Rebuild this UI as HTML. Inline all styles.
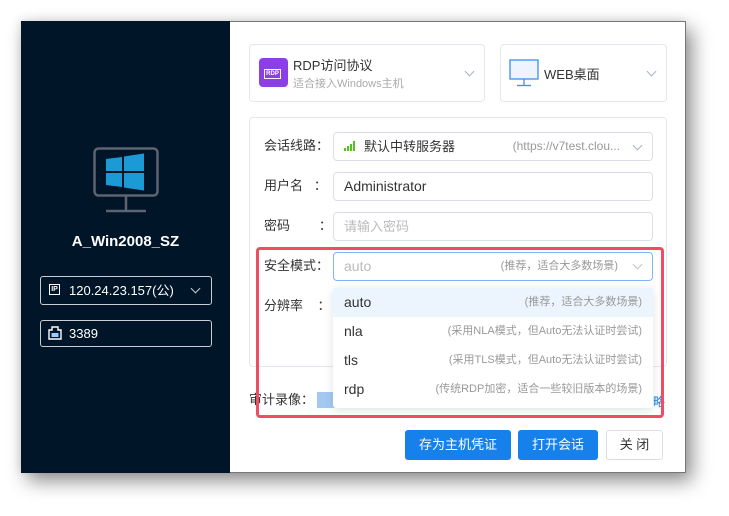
<!DOCTYPE html><html><head><meta charset="utf-8"><style>
*{box-sizing:border-box;margin:0;padding:0}
body{width:729px;height:516px;background:#fff;position:relative;overflow:hidden;font-family:"Liberation Sans","Noto Sans CJK SC",sans-serif;font-size:13px;color:#333}
.abs{position:absolute}
.win{left:21px;top:21px;width:665px;height:452px;background:#fff;box-shadow:6px 8px 18px rgba(0,0,0,.45),-2px -2px 8px rgba(0,0,0,.08);border:1px solid #777}
.left{left:21px;top:21px;width:209px;height:452px;background:#011528}
.box{border:1px solid #e4e7ed;border-radius:4px;background:#fff}
.inp{border:1px solid #dcdfe6;border-radius:4px;background:#fff;height:29px;font-size:13px;line-height:27px;padding-left:10px}
.lbl{font-size:13px;color:#333;line-height:16px}
.chev{width:7px;height:7px;border-right:1px solid #a8b0c0;border-bottom:1px solid #a8b0c0;transform:rotate(45deg)}
.btn{height:30px;border-radius:3px;background:#1681eb;color:#fff;font-size:13px;text-align:center;line-height:30px}
.opt{left:333px;width:320px;height:29px;line-height:29px;padding:0 11px;font-size:13px}
.opt span{float:right;font-size:11px;color:#999}
</style></head><body>
<div class="abs win"></div>
<div class="abs left"></div>
<svg class="abs" style="left:93px;top:147px" width="66" height="66" viewBox="0 0 66 66"><rect x="1.5" y="1.5" width="63" height="47" rx="4" fill="none" stroke="#5c6470" stroke-width="2.5"/><line x1="33" y1="49" x2="33" y2="63" stroke="#5c6470" stroke-width="2.5"/><line x1="13" y1="64" x2="53" y2="64" stroke="#5c6470" stroke-width="2.5"/><path d="M13 12l16-2v14H13zM31 9.5l20-3V24H31zM13 26h16v14l-16-2zM31 26h20v17.5l-20-3z" fill="#1c9ad6"/></svg>
<div class="abs" style="left:21px;top:233px;width:209px;text-align:center;color:#fff;font-weight:bold;font-size:15px">A_Win2008_SZ</div>
<div class="abs" style="left:40px;top:276px;width:172px;height:29px;border:1px solid #c9ccd2;border-radius:3px;color:#fff;font-size:13px;line-height:27px;padding-left:28px">120.24.23.157(公)</div>
<div class="abs" style="left:49px;top:284px;width:11px;height:11px;border:1px solid #fff;font-size:7px;color:#fff;line-height:9px;text-align:center;font-weight:bold">IP</div>
<div class="abs chev" style="left:192px;top:285px;border-color:#c9ccd2"></div>
<div class="abs" style="left:40px;top:320px;width:172px;height:27px;border:1px solid #c9ccd2;border-radius:3px;color:#fff;font-size:13px;line-height:25px;padding-left:28px">3389</div>
<svg class="abs" style="left:48px;top:326px" width="14" height="14" viewBox="0 0 14 14"><path d="M4 1h6v3h3v9H1V4h3z" fill="none" stroke="#fff" stroke-width="1.4"/><rect x="3.5" y="7" width="7" height="4" fill="#9cf"/></svg>

<div class="abs box" style="left:249px;top:44px;width:236px;height:58px"></div>
<div class="abs" style="left:259px;top:58px;width:29px;height:29px;border-radius:4px;background:#8d3fe6"></div>
<div class="abs" style="left:264px;top:69px;width:17px;height:10px;border:1px solid #fff;color:#fff;font-size:6px;line-height:8px;text-align:center;font-weight:bold">RDP</div>
<div class="abs" style="left:293px;top:55px;font-size:13px;color:#333">RDP访问协议</div>
<div class="abs" style="left:293px;top:75px;font-size:11px;color:#aaa">适合接入Windows主机</div>
<div class="abs chev" style="left:466px;top:68px"></div>
<div class="abs box" style="left:500px;top:44px;width:167px;height:58px"></div>
<svg class="abs" style="left:509px;top:59px" width="31" height="28" viewBox="0 0 31 28"><rect x="1" y="1" width="28" height="19" fill="#eef4ff" stroke="#3b8ff0" stroke-width="1.3"/><line x1="15" y1="20" x2="15" y2="26" stroke="#3b8ff0" stroke-width="1.3"/><line x1="8" y1="26.5" x2="22" y2="26.5" stroke="#3b8ff0" stroke-width="1.3"/></svg>
<div class="abs" style="left:544px;top:64px;font-size:13px;color:#333">WEB桌面</div>
<div class="abs chev" style="left:648px;top:68px"></div>

<div class="abs box" style="left:249px;top:117px;width:418px;height:250px"></div>
<div class="abs lbl" style="left:264px;top:138px">会话线路：</div>
<div class="abs inp" style="left:333px;top:132px;width:320px;padding-left:30px">默认中转服务器<span style="position:absolute;right:32px;color:#999;font-size:12px">(https://v7test.clou...</span></div>
<svg class="abs" style="left:344px;top:141px" width="12" height="10"><rect x="0" y="7" width="2" height="3" fill="#52c41a"/><rect x="3" y="5" width="2" height="5" fill="#52c41a"/><rect x="6" y="3" width="2" height="7" fill="#52c41a"/><rect x="9" y="0" width="2" height="10" fill="#52c41a"/></svg>
<div class="abs chev" style="left:634px;top:142px"></div>
<div class="abs lbl" style="left:264px;top:178px">用户名&nbsp;&nbsp;&nbsp;：</div>
<div class="abs inp" style="left:333px;top:172px;width:320px;font-size:14px">Administrator</div>
<div class="abs lbl" style="left:264px;top:218px">密码&nbsp;&nbsp;&nbsp;&nbsp;&nbsp;&nbsp;&nbsp;&nbsp;：</div>
<div class="abs inp" style="left:333px;top:212px;width:320px;color:#bbb">请输入密码</div>
<div class="abs lbl" style="left:264px;top:258px">安全模式：</div>
<div class="abs inp" style="left:333px;top:252px;width:320px;color:#bbb;border-color:#7fb5f5;font-size:14px">auto<span style="position:absolute;right:34px;color:#999;font-size:11px">(推荐，适合大多数场景)</span></div>
<div class="abs chev" style="left:634px;top:261px;border-color:#c0c4cc"></div>
<div class="abs lbl" style="left:264px;top:298px">分辨率&nbsp;&nbsp;&nbsp;&nbsp;：</div>
<div class="abs lbl" style="left:249px;top:392px">审计录像：</div>
<div class="abs" style="left:317px;top:392px;width:20px;height:16px;background:#a3c9f3"></div>
<div class="abs" style="left:653px;top:393px;color:#1681eb;font-size:12px">略</div>

<div class="abs" style="left:333px;top:288px;width:320px;height:120px;background:#fff;box-shadow:0 2px 10px rgba(0,0,0,.12);border-radius:3px"></div>
<div class="abs opt" style="top:288px;background:#ecf4fd;font-size:14px">auto<span>(推荐，适合大多数场景)</span></div>
<div class="abs opt" style="top:317px;font-size:14px">nla<span>(采用NLA模式，但Auto无法认证时尝试)</span></div>
<div class="abs opt" style="top:346px;font-size:14px">tls<span>(采用TLS模式，但Auto无法认证时尝试)</span></div>
<div class="abs opt" style="top:375px;font-size:14px">rdp<span>(传统RDP加密，适合一些较旧版本的场景)</span></div>
<div class="abs" style="left:256px;top:247px;width:408px;height:171px;border:3px solid #ee4d63;border-radius:4px"></div>

<div class="abs btn" style="left:405px;top:430px;width:106px">存为主机凭证</div>
<div class="abs btn" style="left:518px;top:430px;width:80px">打开会话</div>
<div class="abs" style="left:606px;top:430px;width:57px;height:30px;border:1px solid #dcdfe6;border-radius:3px;text-align:center;line-height:28px">关 闭</div>
</body></html>
